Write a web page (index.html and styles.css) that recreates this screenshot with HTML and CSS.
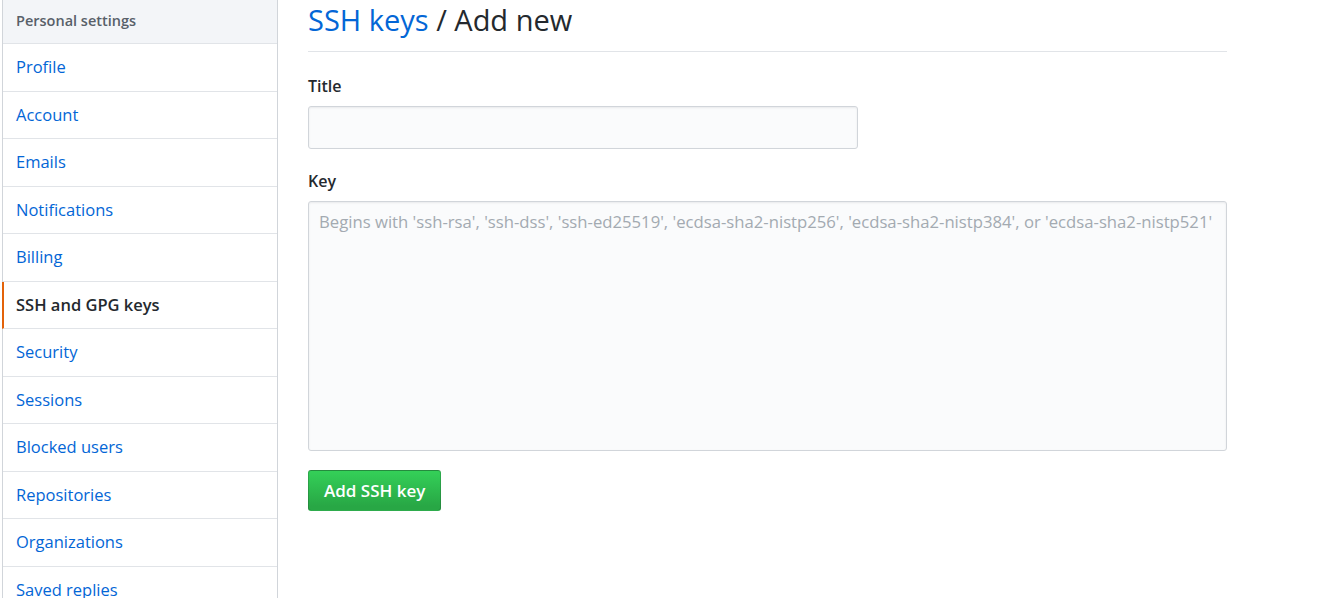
FILE: index.html
```html
<!DOCTYPE html>
<html>
<head>
<meta charset="utf-8">
<link rel="stylesheet" href="styles.css">
</head>
<body>
<div class="page">
  <nav class="menu">
    <div class="menu-heading">Personal settings</div>
    <a class="menu-item" href="#">Profile</a>
    <a class="menu-item" href="#">Account</a>
    <a class="menu-item" href="#">Emails</a>
    <a class="menu-item" href="#">Notifications</a>
    <a class="menu-item" href="#">Billing</a>
    <a class="menu-item selected" href="#">SSH and GPG keys</a>
    <a class="menu-item" href="#">Security</a>
    <a class="menu-item" href="#">Sessions</a>
    <a class="menu-item" href="#">Blocked users</a>
    <a class="menu-item" href="#">Repositories</a>
    <a class="menu-item" href="#">Organizations</a>
    <a class="menu-item" href="#">Saved replies</a>
  </nav>
  <main class="content">
    <h2 class="subhead"><a href="#">SSH keys</a> / Add new</h2>
    <form class="form">
      <label class="label" for="title">Title</label>
      <input class="input title-input" id="title" type="text">
      <label class="label" for="key">Key</label>
      <textarea class="input key-input" id="key" placeholder="Begins with 'ssh-rsa', 'ssh-dss', 'ssh-ed25519', 'ecdsa-sha2-nistp256', 'ecdsa-sha2-nistp384', or 'ecdsa-sha2-nistp521'"></textarea>
      <button class="btn" type="button">Add SSH key</button>
    </form>
  </main>
</div>
</body>
</html>
```
FILE: styles.css
```css
* { box-sizing: border-box; }
html, body { margin: 0; padding: 0; background: #fff; }
body {
  font-family: "Open Sans", "Noto Sans", "Liberation Sans", sans-serif;
  color: #24292e;
  overflow: hidden;
}
.page {
  display: flex;
  align-items: flex-start;
  padding-left: 2px;
  gap: 30px;
}
.menu {
  width: 276px;
  flex: none;
  border: 1px solid #d1d5da;
  border-top: none;
  display: flex;
  flex-direction: column;
}
.menu-heading {
  background: #f3f5f8;
  color: #586069;
  font-size: 14.5px;
  font-weight: 600;
  height: 44px;
  line-height: 42px;
  padding-left: 13px;
  border-bottom: 1px solid #e1e4e8;
}
.menu-item {
  display: block;
  height: 47.5px;
  line-height: 46px;
  padding-left: 13px;
  font-size: 16.5px;
  color: #0366d6;
  text-decoration: none;
  border-bottom: 1px solid #e1e4e8;
}
.menu-item.selected {
  color: #24292e;
  font-weight: 600;
  border-left: 2px solid #e36209;
  padding-left: 12px;
  margin-left: -1px;
}
.content {
  width: 919px;
  flex: none;
}
.subhead {
  margin: 0;
  font-size: 29px;
  font-weight: 400;
  line-height: 40px;
  padding-top: 0;
  padding-bottom: 11px;
  border-bottom: 1px solid #e1e4e8;
}
.subhead a { color: #0366d6; text-decoration: none; }
.form {
  display: flex;
  flex-direction: column;
  align-items: flex-start;
  padding-top: 23px;
}
.label {
  font-size: 16px;
  font-weight: 600;
  line-height: 22px;
  margin-bottom: 9px;
}
.input {
  background: #fafbfc;
  border: 1px solid #d1d5da;
  border-radius: 3px;
  box-shadow: inset 0 1px 2px rgba(27, 31, 35, 0.075);
  font-family: inherit;
  font-size: 16px;
  color: #24292e;
  outline: none;
}
.title-input {
  width: 550px;
  height: 43px;
  margin-bottom: 21px;
}
.key-input {
  width: 919px;
  height: 250px;
  padding: 8px 10px;
  resize: none;
  font-size: 16.7px;
  line-height: 24px;
  margin-bottom: 19px;
}
.key-input::placeholder { color: #a3aab1; }
.btn {
  height: 41px;
  padding: 0 15px;
  font-family: inherit;
  font-size: 17px;
  font-weight: 600;
  color: #fff;
  background: linear-gradient(#34d058, #28a745 90%);
  border: 1px solid rgba(27, 31, 35, 0.2);
  border-radius: 3px;
}
```
